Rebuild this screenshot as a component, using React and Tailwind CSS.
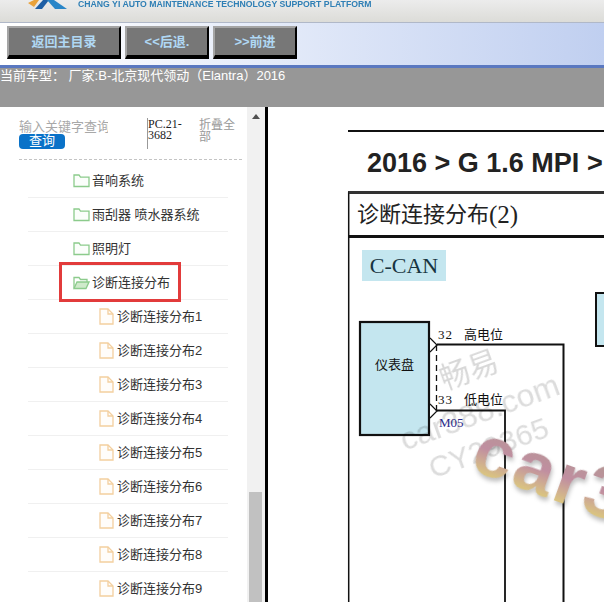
const font = "font-['Liberation_Sans','Noto_Sans_CJK_SC',sans-serif]";
const serif = "font-['Liberation_Serif','Noto_Sans_CJK_SC',serif]";

function FolderIcon({ open }) {
  return (
    <svg width="17" height="15" viewBox="0 0 17 15" fill="none" stroke="#8ccb8c" strokeWidth="1.3" className="shrink-0">
      {open ? (
        <>
          <path d="M1 13V2.500h5l1.500 2H14v2.500" />
          <path d="M1 13.500l3-6.500h12l-3 6.500z" fill="#cfeacb" />
        </>
      ) : (
        <path d="M1 13.500V2h5l1.500 2.200H16v9.300z" fill="#fbfefb" />
      )}
    </svg>
  );
}

function FileIcon() {
  return (
    <svg width="15" height="17" viewBox="0 0 15 17" fill="#fffdfa" stroke="#f3cf9f" strokeWidth="1.3" className="shrink-0">
      <path d="M1 1h8l5 5v10H1z" />
      <path d="M9 1v5h5" fill="none" />
    </svg>
  );
}

function NavButton({ w, children }) {
  return (
    <button className={`${w} h-[33px] bg-[#777777] border-2 border-t-[#a5a5a5] border-l-[#a5a5a5] border-r-black border-b-[4px] border-b-black text-[#b0d8f4] text-[13px] font-bold`}>
      {children}
    </button>
  );
}

function TreeRow({ indent, children }) {
  return (
    <div className={`relative h-[34px] flex items-center border-b border-[#f0f0f0] ${indent}`}>
      {children}
    </div>
  );
}

const folders = ["音响系统", "雨刮器 喷水器系统", "照明灯"];
const files = [1, 2, 3, 4, 5, 6, 7, 8, 9];

function Sidebar() {
  return (
    <div className="w-[265px] shrink-0 flex bg-white overflow-hidden">
      <div className="w-[247px] shrink-0 pt-[4px]">
        <div className="ml-[19px] mr-[5px] h-[49px] flex items-start border-b border-dashed border-[#c4c4c4]">
          <div className="w-[128px] pt-[9px] overflow-hidden">
            <div className="text-[13px] leading-[14px] text-[#a8a8a8] whitespace-nowrap overflow-hidden w-[89px]">输入关键字查询</div>
            <div className="w-[46px] h-[15px] bg-[#0a72c8] rounded-[4px] text-white text-[13px] leading-[14px] text-center">查询</div>
          </div>
          <div className={`w-[52px] h-[31px] border-l border-[#999999] mt-[7px] pr-[8px] pt-[1px] ${serif} text-[12px] leading-[11px] text-[#222222]`}>
            PC.21-3682
          </div>
          <div className="w-[38px] pt-[8px] text-[12px] leading-[12px] text-[#999999]">折叠全部</div>
        </div>
        <div className="ml-[28px] mr-[19px] mt-[4px]">
          {folders.map((f) => (
            <TreeRow key={f} indent="pl-[45px]">
              <FolderIcon />
              <span className="ml-[2px] text-[13px] text-[#333333] whitespace-nowrap">{f}</span>
            </TreeRow>
          ))}
          <TreeRow indent="pl-[45px]">
            <FolderIcon open />
            <span className="ml-[2px] text-[13px] text-[#333333] whitespace-nowrap">诊断连接分布</span>
            <div className="absolute left-[31px] -top-[4px] w-[122px] h-[40px] border-[3px] border-[#e23b3b]" />
          </TreeRow>
          {files.map((n) => (
            <TreeRow key={n} indent="pl-[71px]">
              <FileIcon />
              <span className="ml-[3px] text-[13px] text-[#333333] whitespace-nowrap">诊断连接分布{n}</span>
            </TreeRow>
          ))}
        </div>
      </div>
      <div className="w-[18px] shrink-0 bg-[#f1f1f1] flex flex-col items-center relative">
        <div className="mt-[7px] w-0 h-0 border-x-[4px] border-x-transparent border-b-[5px] border-b-[#505050]" />
        <div className="absolute left-[2px] right-[3px] bottom-0 h-[110px] bg-[#c1c1c1]" />
      </div>
    </div>
  );
}

function Diagram() {
  return (
    <svg width="336" height="495" viewBox="268 107 336 495" className="absolute inset-0" fill="none">
      <path d="M348.700 192V602" stroke="#111" strokeWidth="1.500" />
      <rect x="360" y="322" width="69" height="113" fill="#c4e6ef" stroke="#111" strokeWidth="2.200" />
      <rect x="596" y="293" width="12" height="53" fill="#c4e6ef" stroke="#111" strokeWidth="2" />
      <path d="M430 338l7 7-7 7M430 404l7 7-7 7" fill="#fff" stroke="#111" strokeWidth="1.200" />
      <path d="M436.500 345V411" stroke="#111" strokeWidth="1.300" strokeDasharray="6 4" />
      <path d="M437 344.500H563.500V602" stroke="#111" strokeWidth="2" />
      <path d="M437 410.500H505V602" stroke="#111" strokeWidth="1.800" />
    </svg>
  );
}

function Watermark() {
  return (
    <>
      <div className="absolute left-[171px] top-[248px] -rotate-[20deg] text-[30px] leading-none text-[#d8d8d8] mix-blend-multiply whitespace-nowrap">畅易</div>
      <div className="absolute left-[128px] top-[289px] -rotate-[20deg] text-[32px] leading-none text-[#dcdcdc] mix-blend-multiply whitespace-nowrap">car388.com</div>
      <div className="absolute left-[158px] top-[326px] -rotate-[20deg] text-[30px] leading-none text-[#dcdcdc] mix-blend-multiply whitespace-nowrap">CY29365</div>
      <div className="absolute left-[204px] top-[330px] rotate-[20deg] text-[72px] leading-none font-bold tracking-[3px] text-transparent bg-clip-text bg-linear-to-b from-[#b09a90] via-[#c08ea0] to-[#e6dc66] drop-shadow-[2px_3px_2px_rgba(0,0,0,0.25)] whitespace-nowrap">car3</div>
    </>
  );
}

function Content() {
  return (
    <div className="relative flex-1 bg-white border-l-[3px] border-black overflow-hidden">
      <Diagram />
      <div className="absolute left-[80px] top-[23px] right-0 h-[2px] bg-[#111111]" />
      <div className="absolute left-[99px] top-[39px] text-[27px] leading-[34px] font-bold text-[#222222] whitespace-nowrap">2016 &gt; G 1.6 MPI &gt; 诊断连接分布</div>
      <div className={`absolute left-[80px] top-[84px] right-0 h-[47px] border-y-[3px] border-t-[#333333] border-b-[#111111] border-l border-l-[#111111] pl-[8px] flex items-center text-[22px] text-[#222222] whitespace-nowrap ${serif}`}>诊断连接分布<span className="text-[25px]">(2)</span></div>
      <div className={`absolute left-[94px] top-[143px] w-[84px] h-[31px] bg-[#c4e6ef] text-center text-[22px] leading-[31px] text-[#173440] ${serif}`}>C-CAN</div>
      <div className="absolute left-[107px] top-[250px] text-[13px] leading-[16px] text-[#111111] whitespace-nowrap">仪表盘</div>
      <div className={`absolute left-[170px] top-[220px] ${serif} text-[13px] leading-[16px] tracking-[1px] text-[#111111]`}>32</div>
      <div className="absolute left-[196px] top-[220px] text-[13px] leading-[16px] text-[#111111] whitespace-nowrap">高电位</div>
      <div className={`absolute left-[170px] top-[285px] ${serif} text-[13px] leading-[16px] tracking-[1px] text-[#111111]`}>33</div>
      <div className="absolute left-[196px] top-[285px] text-[13px] leading-[16px] text-[#111111] whitespace-nowrap">低电位</div>
      <div className={`absolute left-[171px] top-[308px] ${serif} text-[13px] leading-[16px] text-[#2b2b8c]`}>M05</div>
      <Watermark />
    </div>
  );
}

export default function App() {
  return (
    <div className={`w-[604px] h-[602px] overflow-hidden flex flex-col ${font}`}>
      <div className="h-[22px] shrink-0 bg-linear-to-b from-[#ececec] to-[#dcdcd8] relative overflow-hidden">
        <svg width="42" height="9" viewBox="0 0 42 9" className="absolute left-[28px] top-0">
          <path d="M0 3L6 0h5L6 7z" fill="#e9a23b" />
          <path d="M7 9L15 0h6L14 9z" fill="#1f5fa5" />
          <path d="M19 0h7l13 9h-12z" fill="#2a86c8" />
        </svg>
        <div className="absolute left-[78px] top-[-3px] text-[8.7px] leading-[14px] font-bold text-[#2f7fb5] whitespace-nowrap">CHANG YI AUTO MAINTENANCE TECHNOLOGY SUPPORT PLATFORM</div>
      </div>
      <div className="h-[46px] shrink-0 bg-linear-to-r from-white from-[5%] to-[#c0cff0] border-t border-t-[#b0b8c8] border-b-[3px] border-b-[#5a78c0] flex items-start pl-[7px] pt-[3px] gap-[4px]">
        <NavButton w="w-[114px]">返回主目录</NavButton>
        <NavButton w="w-[84px]">&lt;&lt;后退.</NavButton>
        <NavButton w="w-[84px]">&gt;&gt;前进</NavButton>
      </div>
      <div className="h-[39px] shrink-0 bg-[#979797] text-white text-[13px] leading-[15px] whitespace-nowrap">当前车型： 厂家:B-北京现代领动（Elantra）2016</div>
      <div className="flex flex-1 min-h-0">
        <Sidebar />
        <Content />
      </div>
    </div>
  );
}
